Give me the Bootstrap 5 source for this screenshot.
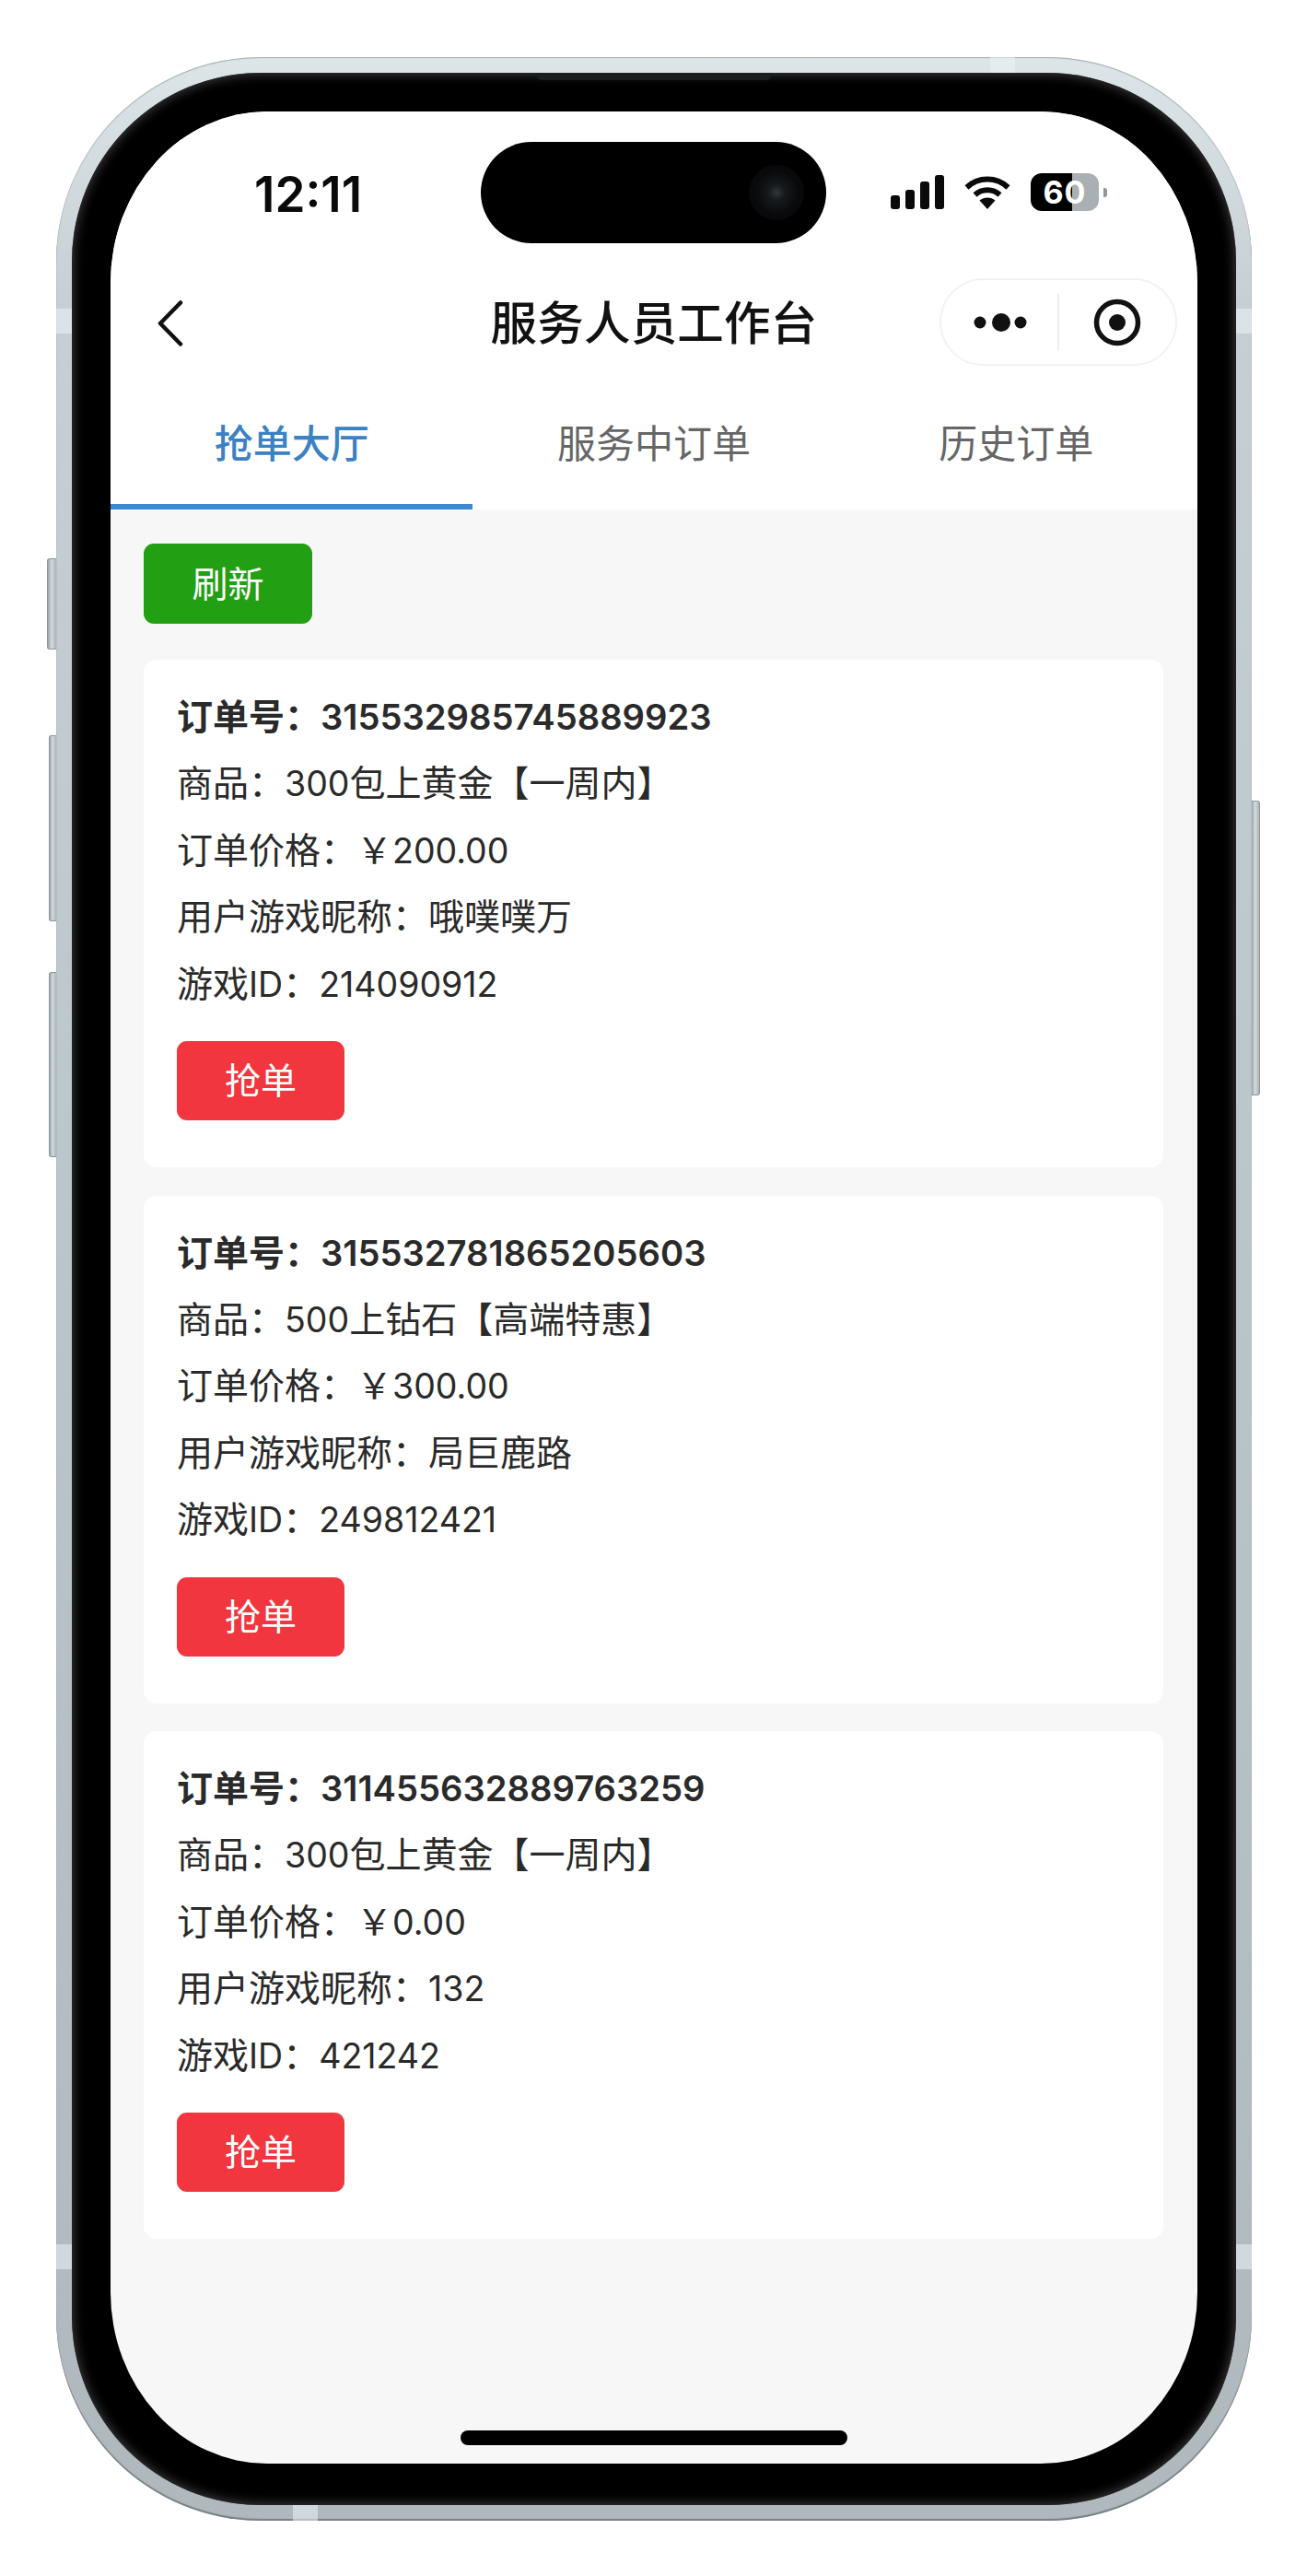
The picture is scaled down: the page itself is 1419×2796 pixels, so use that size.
<!DOCTYPE html>
<html lang="zh-CN">
<head>
<meta charset="utf-8">
<title>服务人员工作台</title>
<link href="https://cdn.jsdelivr.net/npm/bootstrap@5.3.0/dist/css/bootstrap.min.css" rel="stylesheet">
<style>
html,body{background:#fff;margin:0;height:2796px;overflow:hidden}
body{font-family:"Inter","Noto Sans CJK SC",sans-serif;color:#222}
.phone-shell{position:relative;width:1298px;height:2674px;margin:62px 0 0 61px;padding:17px;border-radius:222px;
  background:linear-gradient(180deg,#dce5e8 0,#c6d0d4 10%,#bac5ca 50%,#aeb8bd 100%);
  box-shadow:inset 0 -2px 1px #767f83,inset 0 1px 1px #9fa9ad}
.phone-bezel{height:100%;padding:42px 42px 45px;background:#000;border-radius:205px;box-shadow:inset 0 0 12px 2px #3a3a3a}
.phone-screen{position:relative;height:100%;border-radius:170px/186px;overflow:hidden;background:#f6f7f6}
.side-key{position:absolute;background:linear-gradient(90deg,#9aa4a8,#d3dbde 45%,#aab4b8);border:1px solid #8d979b}
.key-a{left:-10px;width:10px;top:544px;height:99px;border-radius:3px 0 0 3px;border-right:0}
.key-b{left:-8px;width:8px;top:736px;height:202px;border-radius:3px 0 0 3px;border-right:0}
.key-c{left:-8px;width:8px;top:993px;height:201px;border-radius:3px 0 0 3px;border-right:0}
.key-d{right:-9px;width:9px;top:807px;height:320px;border-radius:0 3px 3px 0;border-left:0}
.band{position:absolute;background:rgba(235,242,245,.55)}
.band-top{left:1014px;top:0;width:27px;height:17px}
.band-bot{left:257px;bottom:0;width:27px;height:17px}
.band-l1{left:0;top:273px;width:17px;height:27px}
.band-r1{right:0;top:273px;width:17px;height:27px}
.band-l2{left:0;top:2374px;width:17px;height:27px}
.band-r2{right:0;top:2374px;width:17px;height:27px}
.speaker-slit{position:absolute;left:521px;top:17px;width:256px;height:8px;background:#1c1d1e;border-radius:0 0 6px 6px}
.island{position:absolute;left:402px;top:33px;width:375px;height:110px;border-radius:55px;background:#000;padding-right:24px;z-index:2}
.lens{width:60px;height:60px;border-radius:50%;background:radial-gradient(circle,#30363b 0,#16181a 22%,#0a0a0c 55%,#060607 100%)}
.head-zone{background:#fff;height:432px}
.status-row{height:168px;padding:67px 0 0 156px}
.clock{font-size:53px;font-weight:600;line-height:40px;color:#0a0a0a;padding-top:3px}
.status-icons{margin-right:98px;gap:22px}
.battery-pack{width:74px;height:41px;border-radius:12px;background:linear-gradient(90deg,#000 0,#000 45px,#a9b0b3 45px);color:#fff;font-size:34px;font-weight:700;line-height:41px;text-align:center;letter-spacing:1px}
.battery-tip{width:4px;height:10px;background:#8f979a;border-radius:0 3px 3px 0;margin-left:5px}
.nav-zone{height:123px;display:grid;grid-template-columns:1fr auto 1fr;align-items:center;padding:0 22px}
.nav-back{margin-left:29px}
.nav-title{font-size:50.5px;font-weight:500;line-height:60px;color:#111;letter-spacing:.2px}
.capsule{width:258px;height:95px;border:2px solid #f1f2f2;border-radius:48px;justify-self:end;margin-top:-2px}
.capsule-cell{width:50%}
.capsule-sep{width:2px;height:62px;background:#eceeef;flex:none}
.tab-row{height:141px}
.tab-link{flex:1 1 0;border-bottom:6px solid transparent;font-size:42px;line-height:50px;color:#666;padding:45px 0 0;height:141px;text-align:center}
.tab-on{color:#3b82c4;border-bottom-color:#3a88cf;font-weight:500}
.tab-link:hover{color:#666}
.tab-on:hover{color:#3b82c4}
.work-area{padding:37px 37px 0 36px}
.act-btn{color:#fff;font-size:39px;line-height:50px;border-radius:11px;border:0;padding:0;display:flex;align-items:center;justify-content:center}
.act-btn:hover,.act-btn:active{color:#fff}
.btn-refresh{width:183px;height:87px;background:#229f13}
.btn-refresh:hover{background:#229f13}
.btn-grab{width:182px;height:86px;background:#f2363f;margin-top:26px}
.btn-grab:hover{background:#f2363f}
.order-card{border:0;border-radius:14px;background:#fff;padding:26px 36px 51px;margin-top:30.500px}
.order-first{margin-top:39px}
.order-line{font-size:39px;line-height:72.4px;color:#2a2a2a;margin:0}
.order-no{font-weight:600}
.digits{font-size:37.500px;line-height:0}
.order-no .digits{font-size:38.200px}
.home-pill{position:absolute;left:380px;top:2517px;width:420px;height:16px;border-radius:8px;background:#000}
</style>
</head>
<body>
<div class="phone-shell">
  <div class="side-key key-a"></div>
  <div class="side-key key-b"></div>
  <div class="side-key key-c"></div>
  <div class="side-key key-d"></div>
  <div class="band band-top"></div>
  <div class="band band-bot"></div>
  <div class="band band-l1"></div>
  <div class="band band-r1"></div>
  <div class="band band-l2"></div>
  <div class="band band-r2"></div>
  <div class="phone-bezel">
    <div class="speaker-slit"></div>
    <div class="phone-screen">
      <div class="island d-flex align-items-center justify-content-end"><div class="lens"></div></div>
      <div class="head-zone">
        <div class="status-row d-flex justify-content-between align-items-start">
          <div class="clock">12:11</div>
          <div class="status-icons d-flex align-items-center">
            <svg width="58" height="37" viewBox="0 0 58 37" aria-hidden="true"><rect x="0" y="22" width="10" height="15" rx="3" fill="#0a0a0a"/><rect x="16" y="16" width="10" height="21" rx="3" fill="#0a0a0a"/><rect x="32" y="7" width="10" height="30" rx="3" fill="#0a0a0a"/><rect x="48" y="0" width="10" height="37" rx="3" fill="#0a0a0a"/></svg>
            <svg width="50" height="37" viewBox="0 0 50 37" aria-hidden="true"><path d="M2.500 13.500C15 1.500 35 1.500 47.500 13.500" fill="none" stroke="#0a0a0a" stroke-width="6"/><path d="M11.500 21.500C19 14.500 31 14.500 38.500 21.500" fill="none" stroke="#0a0a0a" stroke-width="6"/><path d="M16.500 27.500C21.500 23.500 28.500 23.500 33.500 27.500L25 37Z" fill="#0a0a0a"/></svg>
            <div class="d-flex align-items-center">
              <div class="battery-pack">60</div>
              <div class="battery-tip"></div>
            </div>
          </div>
        </div>
        <div class="nav-zone">
          <svg class="nav-back" width="28" height="50" viewBox="0 0 28 50" aria-hidden="true"><path d="M25 2.500 3 25l22 22.500" fill="none" stroke="#111" stroke-width="4.500" stroke-linecap="round" stroke-linejoin="round"/></svg>
          <div class="nav-title">服务人员工作台</div>
          <div class="capsule d-flex align-items-center">
            <div class="capsule-cell d-flex justify-content-center">
              <svg width="64" height="20" viewBox="0 0 64 20" aria-hidden="true"><circle cx="11" cy="10" r="6.500" fill="#111"/><circle cx="34" cy="10" r="10" fill="#111"/><circle cx="55" cy="10" r="6.500" fill="#111"/></svg>
            </div>
            <div class="capsule-sep"></div>
            <div class="capsule-cell d-flex justify-content-center">
              <svg width="52" height="52" viewBox="0 0 52 52" aria-hidden="true"><circle cx="26" cy="26" r="22.500" fill="none" stroke="#111" stroke-width="5.500"/><circle cx="26" cy="26" r="9" fill="#111"/></svg>
            </div>
          </div>
        </div>
        <nav class="nav tab-row">
          <a class="nav-link tab-link tab-on" href="#">抢单大厅</a>
          <a class="nav-link tab-link" href="#">服务中订单</a>
          <a class="nav-link tab-link" href="#">历史订单</a>
        </nav>
      </div>
      <div class="work-area">
        <button class="btn act-btn btn-refresh" type="button">刷新</button>
        <div class="card order-card order-first">
          <p class="order-line order-no">订单号：<span class="digits">315532985745889923</span></p>
          <p class="order-line">商品：<span class="digits">300</span>包上黄金【一周内】</p>
          <p class="order-line">订单价格：￥<span class="digits">200.00</span></p>
          <p class="order-line">用户游戏昵称：哦噗噗万</p>
          <p class="order-line">游戏<span class="digits">ID</span>：<span class="digits">214090912</span></p>
          <button class="btn act-btn btn-grab" type="button">抢单</button>
        </div>
        <div class="card order-card">
          <p class="order-line order-no">订单号：<span class="digits">315532781865205603</span></p>
          <p class="order-line">商品：<span class="digits">500</span>上钻石【高端特惠】</p>
          <p class="order-line">订单价格：￥<span class="digits">300.00</span></p>
          <p class="order-line">用户游戏昵称：局巨鹿路</p>
          <p class="order-line">游戏<span class="digits">ID</span>：<span class="digits">249812421</span></p>
          <button class="btn act-btn btn-grab" type="button">抢单</button>
        </div>
        <div class="card order-card">
          <p class="order-line order-no">订单号：<span class="digits">311455632889763259</span></p>
          <p class="order-line">商品：<span class="digits">300</span>包上黄金【一周内】</p>
          <p class="order-line">订单价格：￥<span class="digits">0.00</span></p>
          <p class="order-line">用户游戏昵称：<span class="digits">132</span></p>
          <p class="order-line">游戏<span class="digits">ID</span>：<span class="digits">421242</span></p>
          <button class="btn act-btn btn-grab" type="button">抢单</button>
        </div>
      </div>
      <div class="home-pill"></div>
    </div>
  </div>
</div>
<script src="https://cdn.jsdelivr.net/npm/bootstrap@5.3.0/dist/js/bootstrap.bundle.min.js"></script>
</body>
</html>
